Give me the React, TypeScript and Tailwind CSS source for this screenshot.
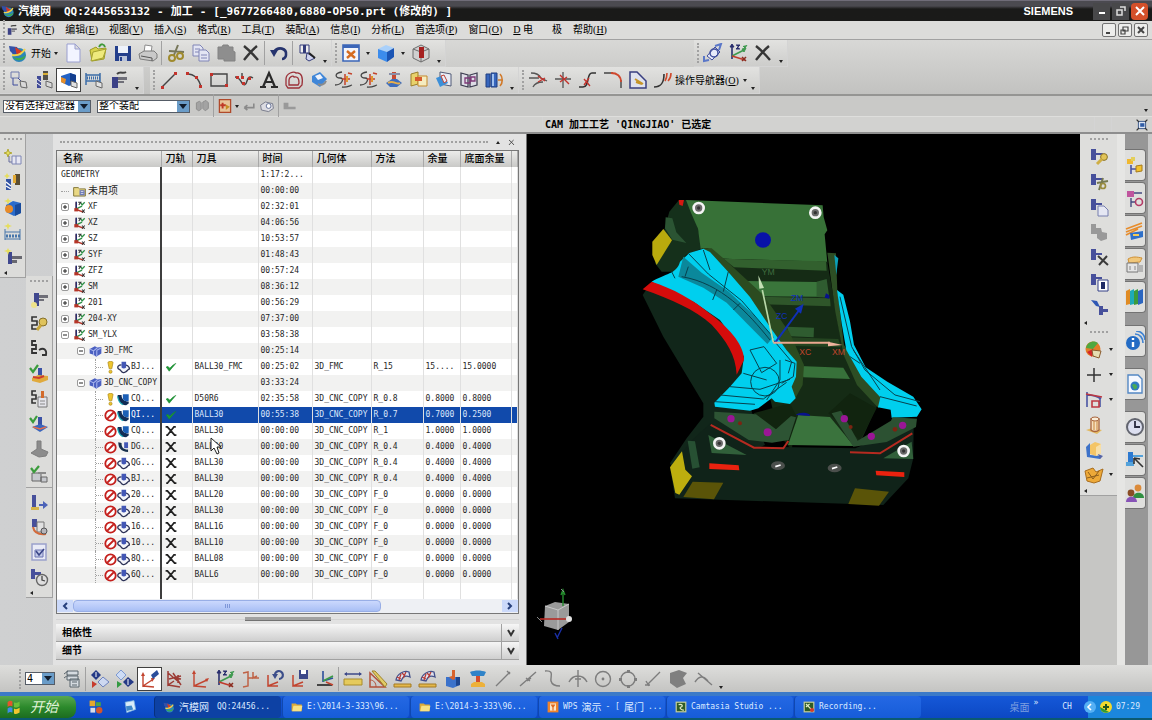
import clsx from "clsx";
import type { ReactNode } from "react";

const icons: Record<string, ReactNode> = {
  nx: (
    <>
      <circle cx="11" cy="12" r="7" fill="#2d86b8" />
      <path d="M5 14c4 5 11 4 13-2-5 4-9 4-13 2z" fill="#3fae45" />
      <path d="M1 3l8 1 3 5-6 3-4-4z" fill="#3350a8" />
      <path d="M7 4l8 5-6 4z" fill="#d63a24" />
      <path d="M4 12c5 1 10-1 13-6" fill="none" stroke="#f0d34a" strokeWidth="2" />
    </>
  ),
  page: <path d="M4 1h8l5 5v13H4zM12 1v5h5" fill="#f2f4ff" stroke="#9a9fd0" />,
  open: (
    <>
      <path d="M2 7l6-3 2 2 8-1-2 11-12 2z" fill="#d8d24e" stroke="#9c9a25" />
      <path d="M5 9l13-3-3 9-12 3z" fill="#eeea7c" stroke="#a5a230" />
      <path d="M11 4c2-4 5-3 6 0" fill="none" stroke="#3f9a3a" strokeWidth="2" />
    </>
  ),
  save: (
    <>
      <path d="M2 3h16v15H2z" fill="#243f8c" />
      <path d="M5 3h10v7H5z" fill="#eef2fa" />
      <path d="M6 13h8v5H6z" fill="#b9c3da" />
      <path d="M7 14h2v4H7z" fill="#243f8c" />
    </>
  ),
  print: (
    <>
      <path d="M7 2l7 1-1 7H6z" fill="#fff" stroke="#8c8c8c" />
      <path d="M1 11l5-3h10l3 3v4l-4 3-13-2z" fill="#c9c9c9" stroke="#7d7d7d" />
      <path d="M3 13l11 2v3" fill="none" stroke="#555" />
    </>
  ),
  cut: (
    <>
      <path d="M12 2L8 12M3 8l15 1" stroke="#77775a" strokeWidth="2" />
      <circle cx="6" cy="15" r="3" fill="none" stroke="#a08b2d" strokeWidth="2" />
      <circle cx="14" cy="13" r="3" fill="none" stroke="#a08b2d" strokeWidth="2" />
    </>
  ),
  copy: (
    <>
      <path d="M2 2h7l3 3v8H2z" fill="#e3e5f3" stroke="#8085b6" />
      <path d="M8 7h7l3 3v8H8z" fill="#e3e5f3" stroke="#8085b6" />
      <path d="M4 6h5M4 9h4M10 12h6M10 15h6" stroke="#8085b6" />
    </>
  ),
  paste: <path d="M2 4h4l1-2h5l1 2h4v4l2 1v9H8v-2H2z" fill="#8e8e8e" stroke="#828282" />,
  cross: <path d="M3 3c5 4 9 8 14 14M16 3C11 7 7 12 3 17" fill="none" stroke="#363636" strokeWidth="2.4" />,
  undo: (
    <>
      <path d="M5 9c4-6 13-4 12 3 0 2-2 4-4 4" fill="none" stroke="#26346e" strokeWidth="2.6" />
      <path d="M1 7l8 0-4 7z" fill="#26346e" />
    </>
  ),
  command: (
    <>
      <path d="M3 2h9v8H3z" fill="#eee" stroke="#333b7a" />
      <path d="M6 2h3v8H6z" fill="#333b7a" />
      <path d="M10 10l8 5-6 3-3-2z" fill="#cfd3ef" stroke="#333b7a" />
      <path d="M12 10l6 5" stroke="#222" strokeWidth="2" />
    </>
  ),
  fit: (
    <>
      <path d="M2 2h16v16H2z" fill="#f3f5fb" stroke="#3b66b8" strokeWidth="1.6" />
      <path d="M2 2h16v3H2z" fill="#3b66b8" />
      <path d="M6 8l8 7M14 8l-8 7" stroke="#d56c20" strokeWidth="2.4" />
    </>
  ),
  cube: (
    <>
      <path d="M2 6l8-4 8 3-7 4z" fill="#a9d0fa" />
      <path d="M2 6l9 3v10l-9-4z" fill="#3c8cec" />
      <path d="M11 9l7-4v9l-7 5z" fill="#1b55b4" />
    </>
  ),
  section: (
    <>
      <path d="M2 6l8-4 8 4v9l-8 4-8-4z" fill="#cfcfcf" stroke="#6d6d6d" />
      <path d="M2 6l8 3 8-3M10 9v10" fill="none" stroke="#6d6d6d" />
      <path d="M8 4h5v11H8z" fill="#a52020" />
    </>
  ),
  orient: (
    <>
      <path d="M4 13l8-9 5 5-8 8z" fill="#e8ebfa" stroke="#3f4d9c" />
      <circle cx="11" cy="10" r="4" fill="none" stroke="#3f4d9c" strokeWidth="1.5" />
      <path d="M12 3l6-2-2 6M1 13v5l5-1" fill="none" stroke="#5a77c8" strokeWidth="2" />
    </>
  ),
  csys: (
    <>
      <path d="M4 2v14" stroke="#2a2f6e" strokeWidth="1.6" />
      <path d="M4 13l12-6" stroke="#3f9a4f" strokeWidth="1.6" />
      <path d="M4 13l13 4" stroke="#c13a2c" strokeWidth="1.6" />
      <path d="M2 4l2-3 2 3zM8 2h4l-4 4h4" fill="#2a2f6e" stroke="#2a2f6e" />
      <path d="M14 6l4-1-2 4zM15 3l2 2 2-3" fill="#3f9a4f" stroke="#3f9a4f" />
      <path d="M14 14l4 4M18 14l-4 4" stroke="#8a2d20" strokeWidth="1.5" />
    </>
  ),
  geomNew: (
    <>
      <path d="M2 2h8v6H2z" fill="none" stroke="#6d78ad" />
      <path d="M4 8v7h5M9 8l3 3" fill="none" stroke="#3f4d9c" />
      <path d="M11 11l6 1 1 6-6-1z" fill="#d9d9d9" stroke="#666" />
    </>
  ),
  toolPair: (
    <>
      <path d="M3 6h4v12H3z" fill="#404a96" />
      <path d="M3 9l4 3M3 13l4 3" stroke="#fff" />
      <path d="M9 1h5v9H9z" fill="#54514a" />
      <path d="M9 3h5v2H9z" fill="#d8ae36" />
      <path d="M12 11l6 2v5l-6-2z" fill="#d9d9d9" stroke="#666" />
    </>
  ),
  blockView: (
    <>
      <path d="M2 6l9-3 6 2v8l-7 3-8-4z" fill="#2463c4" />
      <path d="M11 3l6 2v8l-6 1z" fill="#143f8f" />
      <path d="M2 7l5 2-1 5-4-2z" fill="#e7902b" />
      <path d="M12 11l6 2v5l-6-2z" fill="#e2e2e2" stroke="#666" />
    </>
  ),
  ruler: (
    <>
      <path d="M2 3v12M16 3v9M2 5h14M2 11h14" fill="none" stroke="#3d6da8" strokeWidth="1.5" />
      <path d="M3 8h13" stroke="#3d6da8" strokeDasharray="1 1" strokeWidth="3" />
      <path d="M12 11l6 2v5l-6-2z" fill="#e2e2e2" stroke="#666" />
    </>
  ),
  mill: (
    <>
      <path d="M3 7h6v11H3z" fill="#3b4186" />
      <path d="M9 7h9v3H9zM9 11h6v2H9z" fill="#6f6f78" />
      <path d="M8 4c3-3 6 0 9-2" fill="none" stroke="#444" strokeWidth="2" />
    </>
  ),
  millGlow: (
    <>
      <path d="M5 4h5v13H5z" fill="#3f478e" />
      <path d="M10 6h9v3h-9zM10 10h5v2h-5z" fill="#6f6f78" />
      <circle cx="5" cy="16" r="3" fill="#ece18a" />
    </>
  ),
  starPage: (
    <>
      <path d="M5 2l1 3 3 1-3 1-1 3-1-3-3-1 3-1z" fill="#e6de5c" stroke="#b4ab3a" />
      <path d="M6 9v6h3" fill="none" stroke="#666c9c" />
      <path d="M9 9h9v8H9zM13 9v8" fill="#e7e7f2" stroke="#7f86b4" />
    </>
  ),
  starTool: (
    <>
      <path d="M3 7h5v11H3z" fill="#3454a4" />
      <path d="M3 10l5 4M3 14l5 3" stroke="#fff" strokeWidth="1.4" />
      <path d="M12 2h5v11h-5z" fill="#5a4d33" />
      <path d="M10 3h3v8h-3z" fill="#e3aa34" />
      <path d="M4 1l1 2 2 1-2 1-1 2-1-2-2-1 2-1z" fill="#e6de5c" />
    </>
  ),
  starCube: (
    <>
      <path d="M3 8l7-4 8 2v10l-7 3-8-4z" fill="#2a6ccc" />
      <path d="M12 8l6-2v10l-6 3z" fill="#184b9c" />
      <circle cx="6" cy="12" r="4" fill="#e88b28" />
      <path d="M5 1l1 2 3 1-3 1-1 3-1-3-3-1 3-1z" fill="#e6de5c" />
    </>
  ),
  starRuler: (
    <>
      <path d="M2 7v11M17 7v11M2 10h15M2 17h15" stroke="#4876aa" />
      <path d="M3 14h14" stroke="#4876aa" strokeWidth="3" strokeDasharray="2 1" />
      <path d="M5 1l1 2 3 1-3 1-1 3-1-3-3-1 3-1z" fill="#e6de5c" />
    </>
  ),
  starMill: (
    <>
      <path d="M5 5h4v12H5z" fill="#3f478e" />
      <path d="M9 9h10v3H9zM9 13h5v3H9z" fill="#686870" />
      <path d="M5 1l1 2 3 1-3 1-1 3-1-3-3-1 3-1z" fill="#e6de5c" />
    </>
  ),
  line: (
    <>
      <path d="M3 17L17 3" stroke="#444" strokeWidth="1.4" />
      <path d="M2 16h3v3H2zM15 2h3v3h-3z" fill="#c3332c" />
    </>
  ),
  arc: (
    <>
      <path d="M3 4c8 0 12 5 14 13" fill="none" stroke="#444" strokeWidth="1.4" />
      <path d="M2 2h3v3H2zM11 6h3v3h-3zM15 15h3v3h-3z" fill="#c3332c" />
    </>
  ),
  rect: (
    <>
      <path d="M2 4h16v12H2z" fill="none" stroke="#444" strokeWidth="1.4" />
      <path d="M1 3h3v3H1zM16 14h3v3h-3z" fill="#c3332c" />
    </>
  ),
  spline: (
    <>
      <path d="M1 7c4 0 5 3 7 6s4 2 5-2 3-5 6-3M8 3v6" fill="none" stroke="#444" strokeWidth="1.4" />
      <path d="M2 6h3v3H2zM8 12h3v3H8zM7 6h3v3H7zM14 7h3v3h-3z" fill="#c3332c" />
    </>
  ),
  text: <path d="M1 17h6M12 17h7M4 17l6-14 6 14M6 12h8" fill="none" stroke="#2a2a2a" strokeWidth="2.2" />,
  offset: (
    <>
      <path d="M2 9c0-6 8-8 10-6 6-1 7 5 6 12l-3 3H4l-2-3z" fill="none" stroke="#9b3038" strokeWidth="1.3" />
      <path d="M5 10c0-3 4-5 5-3 4-1 5 2 5 6l-1 2H5z" fill="none" stroke="#9b3038" strokeWidth="1.3" />
    </>
  ),
  patch: (
    <>
      <path d="M3 6l8-4 7 7-7 8-8-5z" fill="#3f86d8" />
      <path d="M6 6l5-2 3 4-5 2z" fill="#eef3fc" />
      <path d="M9 14c3 2 7 0 8-3" fill="none" stroke="#8a8a8a" strokeWidth="2" />
    </>
  ),
  swirl: (
    <>
      <path d="M8 2c-8 1-7 6-2 6s2 7-5 7M8 17c4 1 7-1 10-2" fill="none" stroke="#444" strokeWidth="1.3" />
      <path d="M11 4v11M8 9h8M14 3l4 1" stroke="#c3432c" strokeWidth="1.5" />
      <path d="M12 6h2v6h-2z" fill="#e0952f" />
    </>
  ),
  project: (
    <>
      <path d="M8 2h4v7H8z" fill="#c64a34" />
      <path d="M2 13l6-4h5l5 4-5 4H6z" fill="#3e6dbd" />
      <path d="M4 13c5-3 9 2 12 0" fill="none" stroke="#e8b04d" strokeWidth="2" />
      <path d="M5 3h11v2H5z" fill="#8a8fa8" />
    </>
  ),
  yellowSheets: (
    <>
      <path d="M2 4l7-2v12l-7 2z" fill="#e8d26b" stroke="#9b7f2b" />
      <path d="M9 6h9v10H9z" fill="#f5ecc0" stroke="#c58a2a" />
      <path d="M6 7h7v4H6z" fill="#d65a2c" />
    </>
  ),
  blueSheets: (
    <>
      <path d="M6 2l11 2v12L6 14z" fill="#e9ecf5" stroke="#505a76" />
      <path d="M2 8l8-3 4 8-8 4z" fill="#3c8fd8" />
      <path d="M7 6l3-1 3 6-3 2z" fill="#e8ecf7" stroke="#c34436" />
    </>
  ),
  mirror: (
    <>
      <path d="M2 3l7 2v12l-7-2zM11 5l7-2v12l-7 2z" fill="#dedde6" stroke="#3e3e52" strokeWidth="1.3" />
      <path d="M6 8h5v5H6zM12 7h4v4h-4z" fill="none" stroke="#7d3a78" strokeWidth="1.3" />
    </>
  ),
  extrude: (
    <>
      <path d="M2 4h4v13H2zM7 3h6v14H7z" fill="#3766bd" stroke="#203f80" />
      <path d="M8 4h2v12H8z" fill="#9fc0ef" />
      <path d="M14 10h4M16 4c3 3 3 9 0 12" fill="none" stroke="#d17929" strokeWidth="1.6" />
    </>
  ),
  trimA: (
    <>
      <path d="M1 8h10M3 3c7 0 9 3 10 5l6 3M5 17c2-4 5-5 10-5" fill="none" stroke="#555" strokeWidth="1.3" />
      <path d="M10 6l7 5M10 12l7-4" stroke="#c3332c" strokeWidth="1.4" />
    </>
  ),
  trimB: (
    <>
      <path d="M2 9h16M10 2v16" stroke="#555" strokeWidth="1.3" />
      <path d="M7 5l9 9M7 12l7-5" stroke="#c3332c" strokeWidth="1.4" />
    </>
  ),
  trimC: (
    <>
      <path d="M1 17h4c7 0 3-14 9-14h4" fill="none" stroke="#333" strokeWidth="1.6" />
      <path d="M6 9l6 7M6 15l5-7" stroke="#c3332c" strokeWidth="1.3" />
    </>
  ),
  fillet: (
    <>
      <path d="M1 3h9M18 10v8" stroke="#444" strokeWidth="1.4" />
      <path d="M8 3c6 0 10 3 10 9" fill="none" stroke="#d0482e" strokeWidth="1.8" />
    </>
  ),
  sketch: (
    <>
      <path d="M2 2h7l9 9v7H2z" fill="#dfe2ee" stroke="#3a3f80" strokeWidth="1.5" />
      <path d="M7 9l8 5M8 12l6 2" stroke="#c69428" strokeWidth="2" />
    </>
  ),
  curves: (
    <>
      <path d="M1 17c8 0 10-5 10-13" fill="none" stroke="#333" strokeWidth="1.6" />
      <path d="M12 11c2-3 2-6 2-8M15 11c3-3 3-6 3-8" fill="none" stroke="#cf4a2c" strokeWidth="1.6" />
    </>
  ),
  binocular: <path d="M3 14V6l4-2 2 2v8l-3 2zM11 13V5l4-2 3 3v7l-4 3z" fill="#a3a3a3" stroke="#888" />,
  snap: (
    <>
      <path d="M3 2h14v16H3z" fill="#e8c59a" stroke="#b04a2b" strokeWidth="1.6" />
      <path d="M4 9h7M7 6v7" stroke="#c03a26" strokeWidth="2.4" />
      <path d="M11 8l5 3-5 4z" fill="#c58f23" />
    </>
  ),
  enter: <path d="M4 12h12V7M4 12l4-3M4 12l4 3" fill="none" stroke="#8a8a8a" strokeWidth="2" />,
  solids: (
    <>
      <path d="M2 9l6-4 9 2 1 6-6 4-9-2z" fill="#dcdce2" stroke="#666a7c" />
      <circle cx="12" cy="10" r="3" fill="#fff" stroke="#4b5a88" />
    </>
  ),
  ledge: <path d="M2 6h6v5h9v3H2z" fill="#999" />,
  toolKey: (
    <>
      <path d="M8 3H3v4h5v4H3v4h5" fill="none" stroke="#333" strokeWidth="1.6" />
      <circle cx="14" cy="8" r="4" fill="#dfc35c" stroke="#85702a" />
      <path d="M12 11l-4 5" stroke="#c7a63c" strokeWidth="3" />
    </>
  ),
  toolHook: <path d="M7 2H3v4h4v4H3v4h5M10 11c5-3 8 0 7 5h-4" fill="none" stroke="#333" strokeWidth="1.8" />,
  verify: (
    <>
      <path d="M9 4h4v9H9z" fill="#3a51a5" />
      <path d="M3 14l6-3 10 1v4l-8 3-8-2z" fill="#e0aa3c" />
      <path d="M4 13l6 1 5-2" stroke="#cf3c2c" strokeWidth="2" fill="none" />
      <path d="M1 4l3 4 5-7" fill="none" stroke="#3b9c3c" strokeWidth="2.2" />
    </>
  ),
  toolPost: (
    <>
      <path d="M7 2H3v4h4v4H3v4h4" fill="none" stroke="#333" strokeWidth="1.6" />
      <path d="M9 8h9v10H9z" fill="#e4e4ea" stroke="#777" />
      <path d="M12 2h3v7h-3z" fill="#d36b2c" />
      <path d="M11 12h5M11 15h5" stroke="#888" />
    </>
  ),
  okPlane: (
    <>
      <path d="M9 3h4v9H9z" fill="#3a51a5" />
      <path d="M3 13l8-3 8 3-8 5z" fill="#3b66bd" />
      <path d="M4 13l7 2 6-2" fill="none" stroke="#e36f4c" strokeWidth="1.5" />
      <path d="M1 4l3 4 4-6" fill="none" stroke="#3b9c3c" strokeWidth="2.2" />
    </>
  ),
  greyPlane: <path d="M8 2h4v8l7 3-2 4-7 1-8-4 6-4z" fill="#8c8c8c" stroke="#7d7d7d" />,
  okShop: (
    <>
      <path d="M3 9h9v8H3zM12 13h6v5h-6z" fill="#c7c9ce" stroke="#666" />
      <path d="M9 8h8v2H9z" fill="#8a8a8a" />
      <path d="M2 4l3 4 5-6" fill="none" stroke="#3b9c3c" strokeWidth="2.2" />
    </>
  ),
  drillArrow: (
    <>
      <path d="M3 3h4v13H3z" fill="#47509b" />
      <path d="M2 15h8v3H2z" fill="#d6b44b" />
      <path d="M10 12h4v-3l5 4-5 4v-3h-4z" fill="#4c63b8" />
    </>
  ),
  post: (
    <>
      <path d="M3 2h5v8H3z" fill="#47509b" />
      <path d="M8 5h7v10H8z" fill="#e1e1e1" stroke="#777" />
      <path d="M4 10c1 5 5 8 13 7" fill="none" stroke="#d36b3c" strokeWidth="2" />
      <circle cx="15" cy="14" r="3" fill="#b6b6bc" stroke="#555" />
    </>
  ),
  report: (
    <>
      <path d="M3 2h14v16H3z" fill="#e9ebf6" stroke="#9aa1cc" strokeWidth="1.5" />
      <path d="M6 8h8v7H6z" fill="#c1c9e8" stroke="#6c75b2" />
      <path d="M7 9l3 4 5-6" fill="none" stroke="#3a4588" strokeWidth="1.6" />
    </>
  ),
  timer: (
    <>
      <path d="M2 2h4v10H2zM6 5h6v3H6z" fill="#47509b" />
      <circle cx="13" cy="13" r="5.5" fill="#dedede" stroke="#666" strokeWidth="1.4" />
      <path d="M13 9v4l3 1" fill="none" stroke="#444" strokeWidth="1.3" />
    </>
  ),
  drillKey: (
    <>
      <path d="M2 2h5v11H2zM7 6h7v2H7z" fill="#47509b" />
      <circle cx="15" cy="10" r="3.4" fill="#e2c458" stroke="#8a742a" />
      <path d="M13 12l-5 5" stroke="#cfae44" strokeWidth="3" />
    </>
  ),
  drillCut: (
    <>
      <path d="M2 2h5v11H2zM7 6h6v2H7z" fill="#47509b" />
      <path d="M8 11l11-2M14 6l-4 12" stroke="#777a50" strokeWidth="2" />
      <circle cx="14" cy="14" r="2.5" fill="none" stroke="#9a8c3d" strokeWidth="1.7" />
    </>
  ),
  drillCopy: (
    <>
      <path d="M2 2h5v11H2zM7 6h6v2H7z" fill="#47509b" />
      <path d="M9 9h6l4 4v6H9z" fill="#e5e7f3" stroke="#777eae" />
    </>
  ),
  drillGrey: <path d="M2 2h5v4h5l1 4 5 1v6l-6 2-4-3v-4H2z" fill="#999" />,
  drillDel: (
    <>
      <path d="M2 2h5v11H2zM7 6h6v2H7z" fill="#47509b" />
      <path d="M9 9l10 9M18 9l-8 9" stroke="#3b3b3b" strokeWidth="2" />
    </>
  ),
  drillInfo: (
    <>
      <path d="M2 2h5v11H2zM7 5h6v2H7z" fill="#47509b" />
      <path d="M9 8h10v11H9z" fill="#fff" stroke="#333f85" />
      <path d="M12 10h4v7h-4z" fill="#1f2a66" />
    </>
  ),
  drillMove: (
    <>
      <path d="M2 3l6 1 3 6-4-1z" fill="#2f57b4" />
      <path d="M10 9h4v9h-4zM14 12h5v3h-5z" fill="#47509b" />
    </>
  ),
  shaded: (
    <>
      <circle cx="9" cy="9" r="7.5" fill="#e37c28" />
      <path d="M2 8c1-7 9-8 12-5L9 9z" fill="#4fa83f" />
      <path d="M3 12l6-3-1 8z" fill="#d3262a" />
      <path d="M8 10l9 1-2 7-6-2z" fill="#e6ddb2" stroke="#8a5c2e" />
    </>
  ),
  plus: <path d="M10 3v14M3 10h14" stroke="#333" strokeWidth="1.5" />,
  wcs: (
    <>
      <path d="M3 2v15M3 5c6 0 10 1 14 4M16 7v10" fill="none" stroke="#4954a3" strokeWidth="1.6" />
      <path d="M2 4l16 3M8 11h7v6H8z" fill="none" stroke="#bd3841" strokeWidth="1.6" />
    </>
  ),
  tower: (
    <>
      <path d="M2 15l6-2 10 2-5 4z" fill="#e3ba62" />
      <path d="M7 4v11c2 2 6 2 8 0V4z" fill="#f6e0bf" stroke="#a8643c" strokeWidth="1.3" />
      <ellipse cx="11" cy="4" rx="4" ry="2" fill="#f9ecd8" stroke="#a8643c" />
      <path d="M10 6v9M13 6v9" stroke="#c9843c" />
    </>
  ),
  stock: (
    <>
      <path d="M2 7l4-4v12l12 1-2 3-13-2z" fill="#3d72c8" />
      <path d="M6 5l5-3 6 2v9l-5 3-6-2z" fill="#f4c566" />
      <path d="M12 7l5-3v9l-5 3z" fill="#f7dfa8" />
      <path d="M14 14l5 2-3 3z" fill="#5563a5" />
    </>
  ),
  wraps: (
    <>
      <path d="M1 6l8-3 3 4 7-3-3 12-6 2-7-2z" fill="#eda938" stroke="#a86d1e" />
      <path d="M4 7l5 7 6-8M3 13l12-3" fill="none" stroke="#8c5d1c" />
    </>
  ),
  navA: (
    <>
      <path d="M2 4h6v5H2z" fill="#f0b830" />
      <path d="M6 2h4v4H6z" fill="#e3cf5c" />
      <path d="M6 10v9M6 14h6" stroke="#4954a3" strokeWidth="1.6" />
      <path d="M11 11l6-1v6l-6 1z" fill="#f2c12f" stroke="#a67b1d" />
    </>
  ),
  navB: (
    <>
      <path d="M2 3h7v6H2z" fill="#c0559e" />
      <path d="M9 5h8M6 10v9M6 14h5" stroke="#444a80" strokeWidth="1.4" />
      <circle cx="14" cy="14" r="3.5" fill="none" stroke="#b33a66" strokeWidth="1.6" />
    </>
  ),
  navC: (
    <>
      <path d="M1 8L17 2M1 11l16-6M1 14l12-6" stroke="#e78d2d" strokeWidth="1.7" />
      <path d="M5 12l13-2v6l-12 3z" fill="#2f70c9" />
      <path d="M8 13h6v2H8z" fill="#f1ca5a" />
    </>
  ),
  navD: (
    <>
      <path d="M3 5c5-3 9-2 14-1l-2 4-11 1z" fill="#f1c77a" stroke="#cf9136" />
      <path d="M2 9h11v9H2z" fill="#e5e5e5" stroke="#777" />
      <path d="M13 11h5v7h-5z" fill="#b3b3b3" />
      <path d="M5 12v4M10 12v4" stroke="#888" />
    </>
  ),
  books: (
    <>
      <path d="M1 4l4-2v15l-4 1z" fill="#e08b23" />
      <path d="M5 4l4-2v15l-4 1z" fill="#1eaab8" />
      <path d="M9 4l4-2v15l-4 1z" fill="#3c9a3c" />
      <path d="M13 4l5-2v14l-5 2z" fill="#2c66c0" />
    </>
  ),
  info: (
    <>
      <circle cx="8" cy="12" r="7" fill="#236bc4" />
      <path d="M8 7v2M8 11v5" stroke="#fff" strokeWidth="2.4" />
      <path d="M10 3c5 0 8 4 8 9M11 0c6 0 9 5 9 9" fill="none" stroke="#3f83d3" strokeWidth="1.6" />
    </>
  ),
  webPage: (
    <>
      <path d="M3 1h10l4 4v14H3z" fill="#f5f8ff" stroke="#5488c4" strokeWidth="1.4" />
      <circle cx="10" cy="12" r="4.5" fill="#2f7bc2" />
      <path d="M7 11c2-2 4-1 5 1s-2 4-3 3z" fill="#49ab56" />
    </>
  ),
  clock: (
    <>
      <circle cx="10" cy="10" r="8" fill="#dcdff0" stroke="#62656f" strokeWidth="2" />
      <path d="M10 4v6h5" fill="none" stroke="#2a2c40" strokeWidth="1.8" />
    </>
  ),
  machine: (
    <>
      <path d="M3 2h5v11H3z" fill="#2c79d0" />
      <path d="M8 5h10v2H8zM1 12h8v4H1z" fill="#54a2da" />
      <path d="M9 8l9 9M9 8v6M9 8l6 1" stroke="#333" strokeWidth="1.6" />
    </>
  ),
  roles: (
    <>
      <circle cx="13" cy="5" r="3.4" fill="#dc8b3a" />
      <path d="M8 15c0-7 11-7 11 0z" fill="#2f8f41" />
      <circle cx="6" cy="10" r="3.4" fill="#8a4d25" />
      <path d="M1 19c0-7 11-7 11 0z" fill="#8753b6" />
    </>
  ),
  layers: (
    <>
      <path d="M5 2h11v4H5zM5 7h11v4H5zM8 10h9v8H8z" fill="#d5dbe0" stroke="#59646c" />
      <path d="M2 5l4-3M2 9l4-3M10 13h5M10 16h5" stroke="#59646c" />
    </>
  ),
  gouge: (
    <>
      <path d="M6 1l5 5-5 5-5-5z" fill="#253a86" />
      <path d="M6 3v5" stroke="#fff" />
      <path d="M13 8l6 5-6 5-5-5z" fill="#cdd8f1" stroke="#6d82bf" />
      <path d="M2 12l5 3-5 4z" fill="#c73b2c" />
    </>
  ),
  gougeB: (
    <>
      <path d="M6 1l5 5-5 5-5-5z" fill="#cddcf5" stroke="#7e9ad1" />
      <path d="M13 8l6 5-6 5-5-5z" fill="#253a86" />
      <path d="M13 10v6" stroke="#fff" />
      <path d="M2 12l5 3-5 4z" fill="#339a42" />
    </>
  ),
  axes: (
    <>
      <path d="M4 3v14L17 11M4 17l12 1" fill="none" stroke="#c2442f" strokeWidth="1.4" />
      <path d="M2 5l2-4 2 4zM15 10l4-1-2 4z" fill="#c2442f" />
    </>
  ),
  axesPen: (
    <>
      <path d="M3 6v11l9-6M3 17l11 1" fill="none" stroke="#c2442f" strokeWidth="1.4" />
      <path d="M1 7l2-4 2 4zM11 9l4 0-3 4z" fill="#c2442f" />
      <path d="M11 6l6-5 2 4-6 5z" fill="#2c4f9c" />
    </>
  ),
  axesMesh: (
    <path
      d="M3 2v14l6-4M3 16l12 2M3 4l12 10M8 4l8 12M4 10l12-3M13 6v8M9 9l7 1"
      fill="none"
      stroke="#9c3b34"
      strokeWidth="1.5"
    />
  ),
  axesArrow: <path d="M3 4l5-1v14l-5 1M8 9h11M13 3v6l4-2" fill="none" stroke="#bf6246" strokeWidth="1.5" />,
  axesTurn: (
    <>
      <path d="M3 6v11l10-4M3 17h10" fill="none" stroke="#c2442f" strokeWidth="1.5" />
      <path d="M10 7a4 4 0 1 1 4 3" fill="none" stroke="#3c4e8a" strokeWidth="2.2" />
      <path d="M7 5h6l-3 5z" fill="#3c4e8a" />
    </>
  ),
  axesSave: (
    <>
      <path d="M3 6v11l10-4M3 17h10" fill="none" stroke="#c2442f" strokeWidth="1.5" />
      <path d="M9 1h9v9H9z" fill="#3c4889" />
      <path d="M11 1h5v4h-5z" fill="#fff" />
    </>
  ),
  axesBar: (
    <>
      <path d="M8 2v11M8 12l10-3" stroke="#2c4f9c" strokeWidth="1.6" />
      <path d="M8 12l10-5" stroke="#3b9b46" strokeWidth="1.6" />
      <path d="M2 15h15v2H2z" fill="#444" />
      <path d="M11 13l7 3" stroke="#c2442f" strokeWidth="1.5" />
    </>
  ),
  measure: (
    <>
      <path d="M1 10h18v6H1z" fill="#e5ca5c" stroke="#a98c2a" />
      <path d="M2 5h16" stroke="#3c4889" strokeWidth="1.5" />
      <path d="M1 5l3-2v4zM19 5l-3-2v4z" fill="#3c4889" />
    </>
  ),
  angle: (
    <>
      <path d="M2 4v14h15z" fill="none" stroke="#b2503a" strokeWidth="1.5" />
      <path d="M4 2l3 0 12 13-2 3z" fill="#e2cb66" stroke="#9c842c" />
      <path d="M2 11c4 0 6 3 6 7" fill="none" stroke="#b2503a" />
    </>
  ),
  gauge: (
    <>
      <path d="M3 11c1-6 8-10 13-8l1 5c-4-2-7-1-9 4z" fill="#dfe2ee" stroke="#44508a" strokeWidth="1.3" />
      <path d="M6 11l2-6M10 9l3-6M4 8l4 2M9 4l3 3" stroke="#b73a34" strokeWidth="1.3" />
      <path d="M1 15h17v3H1z" fill="#e4b84a" stroke="#a47a22" />
    </>
  ),
  pot: (
    <>
      <path d="M3 8h14v8l-7 3-7-2z" fill="#3b72cb" />
      <path d="M13 8h4v8l-4 1z" fill="#1e468f" />
      <path d="M9 1h3v9l-2 1-4-3 3-1z" fill="#d9622b" />
    </>
  ),
  stamp: (
    <>
      <path d="M2 3c5-2 11-2 16 0l-2 4H4z" fill="#2f83c8" />
      <path d="M8 7h4v7H8z" fill="#d34c2c" />
      <path d="M3 15l3-2h8l3 2v3H3z" fill="#edb13a" />
    </>
  ),
  gLine: <path d="M3 17L17 3M14 2l3 3" stroke="#7d7d7d" strokeWidth="1.4" fill="none" />,
  gLineDot: <path d="M2 17L18 3M8 9l4 3M9 12l4-3" stroke="#7d7d7d" strokeWidth="1.4" fill="none" />,
  gCurve: <path d="M2 2c10-1 5 6 6 10s4 5 9 5" stroke="#7d7d7d" strokeWidth="1.4" fill="none" />,
  gCross: <path d="M10 1v17M1 13c4-8 14-8 18 0M7 10h6" stroke="#7d7d7d" strokeWidth="1.4" fill="none" />,
  gTarget: (
    <>
      <circle cx="10" cy="10" r="7.5" fill="none" stroke="#7d7d7d" strokeWidth="1.4" />
      <circle cx="10" cy="10" r="1.4" fill="#7d7d7d" />
    </>
  ),
  gCircle: (
    <>
      <circle cx="10" cy="10" r="7" fill="none" stroke="#7d7d7d" strokeWidth="1.4" />
      <path d="M9 1h3v3H9zM9 16h3v3H9zM1 9h3v3H1zM16 9h3v3h-3z" fill="#7d7d7d" />
    </>
  ),
  gSlash: <path d="M5 15L17 3M3 12l3 5M2 16h5" stroke="#7d7d7d" strokeWidth="1.4" fill="none" />,
  gFace: <path d="M2 4l9-3 8 3-4 5 3 6-9 4-7-5z" fill="#7f7f7f" />,
  gTangent: <path d="M2 13c4-6 8-7 13-1M5 4l14 12" stroke="#7d7d7d" strokeWidth="1.4" fill="none" />,
  flag: (
    <>
      <path d="M2 4c2-2 4-2 6-1v6c-2-1-4-1-6 1z" fill="#e5552c" />
      <path d="M10 4c2 1 4 1 7-1v6c-3 2-5 2-7 1z" fill="#6cc03a" />
      <path d="M2 12c2-2 4-2 6-1v6c-2-1-4-1-6 1z" fill="#3f8ce8" />
      <path d="M10 12c2 1 4 1 7-1v6c-3 2-5 2-7 1z" fill="#f3c62f" />
    </>
  ),
  quick: (
    <>
      <path d="M2 2h7v7H2z" fill="#e5a82e" />
      <path d="M10 4h6v5h-6z" fill="#4aa348" />
      <path d="M3 11h6v6H3z" fill="#d9dde8" />
      <circle cx="14" cy="14" r="4" fill="#d4552b" />
    </>
  ),
  desktop: (
    <>
      <path d="M4 4l11-2 2 11-11 4z" fill="#d9ecf9" stroke="#7fb5df" />
      <path d="M5 9l7-1 2 5-8 2z" fill="#3f88c9" />
    </>
  ),
  folder: (
    <>
      <path d="M1 4h7l2 2h8v11H1z" fill="#dba938" />
      <path d="M4 8h15l-2 9H2z" fill="#f7e183" />
    </>
  ),
  wps: (
    <>
      <path d="M1 1h18v18H1z" fill="#f0842b" />
      <path d="M5 4h10v12H5z" fill="#fbe7c9" />
      <path d="M6 6h8l-3 5v5H9v-5z" fill="#e36a1f" />
    </>
  ),
  camtasia: (
    <>
      <path d="M1 1h18v18H1z" fill="#c6cf9d" />
      <path d="M3 3h14v14H3z" fill="#2f5c25" />
      <path d="M6 6c6-2 8 3 4 4s1 6 5 5" fill="none" stroke="#e5edc5" strokeWidth="2" />
    </>
  ),
  recorder: (
    <>
      <path d="M1 1h18v18H1z" fill="#c6cf9d" />
      <path d="M3 3h14v14H3z" fill="#2f5c25" />
      <path d="M5 5l8 8M5 10l6-5" stroke="#e5edc5" strokeWidth="2" />
      <circle cx="15" cy="15" r="3.5" fill="#d73c2c" />
    </>
  ),
  unused: (
    <>
      <path d="M1 4h7l2 2h9v11H1z" fill="#e9d884" stroke="#84783a" strokeWidth="1.5" />
      <path d="M10 8h8v8h-8z" fill="#6d7ab6" />
      <path d="M12 10h4M12 13h4" stroke="#fff" />
    </>
  ),
  mcs: (
    <>
      <path d="M5 2v11l11 4" fill="none" stroke="#b53528" strokeWidth="2.2" />
      <path d="M5 1v11" stroke="#25306f" strokeWidth="2.4" />
      <path d="M5 12l9-4M12 3l2 3 4-4" fill="none" stroke="#2e8e46" strokeWidth="2" />
      <path d="M2 11h6v5H2z" fill="#b53528" />
      <path d="M8 2h4l-3 4M14 13l4 5M18 13l-4 5" fill="none" stroke="#333" strokeWidth="1.6" />
    </>
  ),
  workpiece: (
    <>
      <path d="M1 6l8-4 4 2 6-1v10l-8 5-4-3-6-2z" fill="#4a5fc0" />
      <path d="M1 6l6 3 6-5M7 9v7M12 8l6-3M12 8v9" fill="none" stroke="#a9b6ee" strokeWidth="1.6" />
    </>
  ),
  warn: (
    <>
      <path d="M6 2c2-2 6-2 8 0l-2 10H8z" fill="#eec52e" stroke="#a88412" />
      <circle cx="10" cy="16.5" r="2.4" fill="#eec52e" stroke="#a88412" />
    </>
  ),
  deny: (
    <>
      <circle cx="10" cy="10" r="8" fill="#fff" stroke="#c41f1c" strokeWidth="2.8" />
      <path d="M15 5L5 15" stroke="#c41f1c" strokeWidth="2.8" />
    </>
  ),
  contour: (
    <>
      <path d="M7 6c-5 0-7 3-5 6 1 1 3 1 4 3s4 4 7 2 3-3 5-4 1-6-5-7" fill="#f4f5fa" stroke="#2e3358" strokeWidth="2" />
      <path d="M7 1h7v9c-2 2-5 2-7 0z" fill="#4357b5" />
    </>
  ),
  cavity: (
    <>
      <path d="M1 3c0 8 4 15 13 16l4-3v-3C11 13 7 9 7 3z" fill="#122c55" />
      <path d="M9 2h9v10c-4 2-8 0-9-3z" fill="#1b5fb6" />
      <path d="M1 5c1 7 4 11 8 13" fill="none" stroke="#17a9b6" strokeWidth="2" />
    </>
  ),
  slab: (
    <>
      <path d="M2 2c0 9 4 14 15 15v-4C9 13 7 9 7 3z" fill="#17304d" />
      <path d="M11 2h6v9h-6z" fill="#4357b5" />
    </>
  ),
  check: <path d="M2 10l5 7L18 4l-5 3-5 5-3-3z" fill="#1c9a35" stroke="#17862d" />,
  noPath: <path d="M1 3h3l12 14h3M18 3h-3L4 17H2" fill="none" stroke="#222" strokeWidth="3" />,
  expand: (
    <>
      <path d="M4 4h12v12H4z" fill="#dfe6f2" stroke="#2f4f86" strokeWidth="1.5" />
      <path d="M7 7h7v6H7z" fill="#2f5ca6" />
      <path d="M1 1l4 4M19 1l-4 4M1 19l4-4M19 19l-4-4" stroke="#333" strokeWidth="2" />
    </>
  ),
};

type IconProps = { name: string; className?: string };

const Icon = ({ name, className = "size-5" }: IconProps) => (
  <svg viewBox="0 0 20 20" className={clsx("shrink-0", className)} aria-hidden="true">
    {icons[name]}
  </svg>
);

const Tool = ({ name, active }: { name: string; active?: boolean }) => (
  <button
    type="button"
    aria-label={name}
    className={clsx(
      "flex h-6 w-[25px] shrink-0 items-center justify-center",
      active && "border border-neutral-700 bg-white"
    )}
  >
    <Icon name={name} />
  </button>
);

const Caret = () => (
  <svg viewBox="0 0 4 3" className="h-[3px] w-1 shrink-0" aria-hidden="true">
    <path d="M0 0h4L2 3z" fill="#222" />
  </svg>
);

const DropCaret = () => (
  <span className="flex w-[10px] shrink-0 items-center justify-center">
    <Caret />
  </span>
);

const More = () => (
  <span className="flex h-5 w-3 shrink-0 items-end justify-center">
    <Caret />
  </span>
);

const Grip = () => <span className="mr-px ml-[3px] h-5 shrink-0 border-l-2 border-dotted border-neutral-400" />;
const Divider = () => <span className="mx-px h-6 w-px shrink-0 bg-neutral-400" />;

const Band = ({ children }: { children: ReactNode }) => (
  <div className="flex items-center border-r border-b border-neutral-300 bg-linear-to-b from-[#e2e2e0] to-[#cdcdcb]">
    {children}
  </div>
);

const Combo = ({ label, value, className }: { label: string; value: string; className: string }) => (
  <label className={clsx("relative block shrink-0", className)}>
    <select
      aria-label={label}
      className="block h-[13px] w-full appearance-none overflow-hidden border border-[#555c66] bg-white pl-px text-[10px] leading-none text-black"
    >
      <option>{value}</option>
    </select>
    <span className="pointer-events-none absolute inset-y-px right-px flex w-3 items-center justify-center bg-[#6a9cc8]">
      <svg viewBox="0 0 8 5" className="h-[5px] w-2">
        <path d="M0 0h8L4 5z" fill="#111c2c" />
      </svg>
    </span>
  </label>
);

const menus: [string, string][] = [
  ["文件", "F"],
  ["编辑", "E"],
  ["视图", "V"],
  ["插入", "S"],
  ["格式", "R"],
  ["工具", "T"],
  ["装配", "A"],
  ["信息", "I"],
  ["分析", "L"],
  ["首选项", "P"],
  ["窗口", "O"],
];

const MenuItem = ({ label, hotkey }: { label: string; hotkey: string }) => (
  <button type="button" className="whitespace-nowrap">
    {label}(<u>{hotkey}</u>)
  </button>
);

type Row = {
  name: string;
  level: number;
  kind?: string;
  status?: string;
  open?: boolean;
  cells: string[];
};

const group = (name: string, time: string): Row => ({ name, level: 1, kind: "mcs", cells: [time] });

const op = (
  name: string,
  status: string,
  kind: string,
  tool: string,
  time: string,
  geometry: string,
  method: string,
  stock: string,
  floor: string
): Row => ({ name, level: 3, kind, status, cells: [time, tool, geometry, method, stock, floor] });

const COPY = "3D_CNC_COPY";

const rows: Row[] = [
  { name: "GEOMETRY", level: 0, cells: ["1:17:2..."] },
  { name: "未用项", level: 1, kind: "unused", cells: ["00:00:00"] },
  group("XF", "02:32:01"),
  group("XZ", "04:06:56"),
  group("SZ", "10:53:57"),
  group("SYF", "01:48:43"),
  group("ZFZ", "00:57:24"),
  group("SM", "08:36:12"),
  group("201", "00:56:29"),
  group("204-XY", "07:37:00"),
  { ...group("SM_YLX", "03:58:38"), open: true },
  { name: "3D_FMC", level: 2, kind: "workpiece", open: true, cells: ["00:25:14"] },
  op("BJ...", "warn", "contour", "BALL30_FMC", "00:25:02", "3D_FMC", "R_15", "15....", "15.0000"),
  { name: COPY, level: 2, kind: "workpiece", open: true, cells: ["03:33:24"] },
  op("CQ...", "warn", "cavity", "D50R6", "02:35:58", COPY, "R_0.8", "0.8000", "0.8000"),
  op("QI...", "deny", "cavity", "BALL30", "00:55:38", COPY, "R_0.7", "0.7000", "0.2500"),
  op("CQ...", "deny", "cavity", "BALL30", "00:00:00", COPY, "R_1", "1.0000", "1.0000"),
  op("DG...", "deny", "slab", "BALL30", "00:00:00", COPY, "R_0.4", "0.4000", "0.4000"),
  op("QG...", "deny", "contour", "BALL30", "00:00:00", COPY, "R_0.4", "0.4000", "0.4000"),
  op("BJ...", "deny", "contour", "BALL30", "00:00:00", COPY, "R_0.4", "0.4000", "0.4000"),
  op("20...", "deny", "contour", "BALL20", "00:00:00", COPY, "F_0", "0.0000", "0.0000"),
  op("20...", "deny", "contour", "BALL30", "00:00:00", COPY, "F_0", "0.0000", "0.0000"),
  op("16...", "deny", "contour", "BALL16", "00:00:00", COPY, "F_0", "0.0000", "0.0000"),
  op("10...", "deny", "contour", "BALL10", "00:00:00", COPY, "F_0", "0.0000", "0.0000"),
  op("8Q...", "deny", "contour", "BALL08", "00:00:00", COPY, "F_0", "0.0000", "0.0000"),
  op("6Q...", "deny", "contour", "BALL6", "00:00:00", COPY, "F_0", "0.0000", "0.0000"),
];

const Toggle = ({ open }: { open?: boolean }) => (
  <button type="button" aria-label={open ? "折叠" : "展开"} className="shrink-0">
    <svg viewBox="0 0 8 8" className="size-2">
      <rect x="0.5" y="0.5" width="7" height="7" rx="1.5" fill="#fff" stroke="#999" />
      <path d={open ? "M2 4h4" : "M2 4h4M4 2v4"} stroke="#222" />
    </svg>
  </button>
);

const NameCell = ({ row, selected }: { row: Row; selected: boolean }) => {
  if (row.level === 0) return <span className="pl-1">{row.name}</span>;

  if (row.level === 3) {
    return (
      <div className="flex h-4 items-center pl-[38px]">
        <span className="h-4 w-2 shrink-0 border-l border-dotted border-neutral-400 pt-2">
          <span className="block border-t border-dotted border-neutral-400" />
        </span>
        <Icon name={row.status ?? ""} className="ml-px size-[13px]" />
        <Icon name={row.kind ?? ""} className="size-[13px]" />
        <span className={clsx("flex h-4 flex-1 items-center pl-px", selected && "bg-[#114aab] text-white")}>
          {row.name}
        </span>
      </div>
    );
  }

  return (
    <div className={clsx("flex h-4 items-center gap-1", row.level === 1 ? "pl-1" : "pl-5")}>
      {row.kind === "unused" ? (
        <span className="h-px w-2 border-t border-dotted border-neutral-400" />
      ) : (
        <Toggle open={row.open} />
      )}
      <span className="flex items-center gap-[2px]">
        <Icon name={row.kind ?? ""} className="size-[13px]" />
        <span className={row.kind === "unused" ? "text-[10px]" : ""}>{row.name}</span>
      </span>
    </div>
  );
};

const OperationTable = () => (
  <table className="w-full table-fixed border-collapse bg-white text-[8px] leading-none text-neutral-800">
    <colgroup>
      <col className="w-[104px]" />
      <col className="w-[31px]" />
      <col className="w-[66px]" />
      <col className="w-[54px]" />
      <col className="w-[59px]" />
      <col className="w-[52px]" />
      <col className="w-[37px]" />
      <col className="w-[51px]" />
      <col />
    </colgroup>
    <thead>
      <tr className="h-4 bg-linear-to-b from-[#ececea] to-[#c9c9c7] text-left text-[10px] text-black">
        {["名称", "刀轨", "刀具", "时间", "几何体", "方法", "余量", "底面余量", ""].map((title, i) => (
          <th
            key={i}
            className={clsx(
              "overflow-hidden whitespace-nowrap border-r border-[#a8a8a8] p-0 font-medium",
              i === 0 ? "pl-[6px]" : "pl-1"
            )}
          >
            {title}
          </th>
        ))}
      </tr>
    </thead>
    <tbody>
      {rows.map((row, i) => {
        const selected = i === 15;
        const [time, tool = "", geometry = "", method = "", stock = "", floor = ""] = row.cells;
        return (
          <tr
            key={i}
            className={clsx(
              "h-4",
              i % 2 === 1 && !selected && "bg-[#f2f2f1]",
              selected && "text-[#dbe6fb]"
            )}
          >
            <td className="overflow-hidden whitespace-nowrap border-r-2 border-[#3d3d3d] p-0">
              <NameCell row={row} selected={selected} />
            </td>
            <td className={clsx("p-0 pl-[3px]", selected && "bg-[#114aab]")}>
              {row.level === 3 ? (
                <Icon name={i === 12 || i === 14 || i === 15 ? "check" : "noPath"} className="size-3" />
              ) : null}
            </td>
            {[tool, time, geometry, method, stock, floor, ""].map((cell, c) => (
              <td
                key={c}
                className={clsx(
                  "overflow-hidden whitespace-nowrap border-x border-[#e0e0e0] p-0 pl-[2px]",
                  selected && "bg-[#114aab]"
                )}
              >
                {cell}
              </td>
            ))}
          </tr>
        );
      })}
      <tr className="h-4">
        <td className="border-r-2 border-[#3d3d3d]" />
        {[0, 1, 2, 3, 4, 5, 6, 7].map((c) => (
          <td key={c} className="border-r border-[#e0e0e0]" />
        ))}
      </tr>
    </tbody>
  </table>
);

const Section = ({ title }: { title: string }) => (
  <button
    type="button"
    className="flex h-[18px] w-full items-center justify-between border-b border-neutral-400 bg-linear-to-b from-[#f6f6f6] to-[#cfcfcf] pl-[6px] text-[10px] font-bold"
  >
    {title}
    <span className="flex h-full w-[18px] items-center justify-center border-l border-neutral-400">
      <svg viewBox="0 0 8 8" className="size-2">
        <path d="M1 1l3 5 3-5" fill="none" stroke="#333" strokeWidth="2" />
      </svg>
    </span>
  </button>
);

const Navigator = () => (
  <section className="flex w-[463px] shrink-0 flex-col bg-[#e2e2e2]">
    <div className="flex h-4 items-center gap-2 pr-1 pl-1">
      <span className="flex-1 border-t-2 border-dotted border-neutral-400" />
      <button type="button" aria-label="收起" className="flex rotate-180">
        <Caret />
      </button>
      <button type="button" aria-label="关闭" className="flex">
        <Icon name="cross" className="size-[7px]" />
      </button>
    </div>
    <div className="border border-[#777]">
      <OperationTable />
      <div className="flex h-[14px] items-center bg-[#eef0f4]">
        <button type="button" aria-label="向左滚动" className="flex w-4 justify-center bg-[#cbd9fa]">
          <svg viewBox="0 0 8 12" className="h-3 w-2">
            <path d="M6 3L3 6l3 3" fill="none" stroke="#27407c" strokeWidth="2" />
          </svg>
        </button>
        <div className="flex h-3 w-[308px] items-center justify-center gap-px rounded-sm border border-[#98aee6] bg-linear-to-b from-[#cbd8fd] to-[#a9bff5]">
          <span className="h-1 w-px bg-[#7f97d8]" />
          <span className="h-1 w-px bg-[#7f97d8]" />
          <span className="h-1 w-px bg-[#7f97d8]" />
        </div>
        <button type="button" aria-label="向右滚动" className="ml-auto flex w-4 justify-center bg-[#cbd9fa]">
          <svg viewBox="0 0 8 12" className="h-3 w-2">
            <path d="M2 3l3 3-3 3" fill="none" stroke="#27407c" strokeWidth="2" />
          </svg>
        </button>
      </div>
    </div>
    <div className="flex h-[10px] items-center justify-center">
      <span className="h-px flex-1 bg-neutral-300" />
      <span className="h-1 w-[86px] border-b border-neutral-500 bg-neutral-400" />
      <span className="h-px flex-1 bg-neutral-300" />
    </div>
    <Section title="相依性" />
    <Section title="细节" />
  </section>
);

const bolts = [
  [236, 84],
  [586, 98],
  [298, 790],
  [851, 813],
];

const Viewport = () => (
  <svg viewBox="527 134 553 531" className="min-w-0 flex-1 bg-black" role="img" aria-label="模型">
    <g transform="translate(620 180) scale(0.3333)">
      <path d="M148 95L175 62l25-2 30 70 18 75-50 20-28 50h-45l-20-25z" fill="#15301b" />
      <path d="M137 112l20 3 12 42 30 32-42-10-22-34z" fill="#2b5433" />
      <path d="M97 185l33-38 26 34-46 74-13-30z" fill="#b9aa0d" />
      <path d="M176 60h16l-4 18-10-4z" fill="#d41812" />
      <path d="M68 345l27-40 290 150 10 240 40 100-260 110-25-55 50-75 50-65V670L130 470z" fill="#11261a" />
      <path d="M198 60l410 16 3 35 11 40-8 12 8 85-312-12-48-32-20 2-8-60-22-50z" fill="#377137" />
      <path d="M310 236l312 9 40 230 60 120 60 60-60 130-190-60-70-20-60-260z" fill="#152b15" />
      <path d="M310 236l308 8 2 28-278-10z" fill="#32602e" />
      <path d="M375 303l216 3v44l-176-1z" fill="#3a753b" />
      <path d="M410 350l220 5 2 24-204-6z" fill="#2f562a" />
      <path d="M500 440l82 3-1 29-70-3zM590 305l30 -8 8 56-38-2z" fill="#2f5c30" />
      <path d="M505 472l150 5 8 25-140-4z" fill="#244420" />
      <path d="M540 558l130 5 20 34-140-5z" fill="#37713a" />
      <path d="M248 204l27 1 35 30 120 110 80 115 42 95-4 60-22 40-30-60-60-130z" fill="#2b4b20" />
      <path d="M622 218l26 2 4 110 20 165 50 80 62 60-8 50-65-70-40-90-25-130z" fill="#2d4e24" />
      <path d="M400 700l110-30 20 40-15 100-25-30z M625 700l65-60 80 45-50 95z" fill="#11240f" />

      <path
        d="M95 305c40-25 75-22 85-60l28-26 42-13 20 10 55 60 65 75 60 90 50 70 30 34-2 45-13 30 12 35-17 17-45-7-10-10-40 30-25 7-105-12-2-12 47-48 35-40 7-50-22-40-50-70-80-55-70-30z"
        fill="#00cfee"
      />
      <path d="M190 230l55 48 80 56 75 70 60 68-18 20-62-62-60-62-70-45-75-33z" fill="#0b889b" />
      <path
        d="M95 305c65 22 120 50 180 100 60 45 98 95 97 135l-22 44c-3-60-30-100-75-150-50-45-120-75-207-106z"
        fill="#d50c0b"
      />
      <g fill="none" stroke="#07404c" strokeWidth="3">
        <path d="M185 290c120 20 200 110 265 190M325 275l-15 60M205 220l60 62 100 80 95 110" />
        <path d="M250 210l20 60M155 275l10 20M195 290l10-30M290 330l-12 30M340 390l20-20" />
        <path d="M390 510l42-10 38 50-45 28zM495 540l30 10-5 40-35 20" />
        <circle cx="435" cy="605" r="43" />
        <path d="M330 620l90 8 90-30M300 645l130 12 70-50M285 665l120 8M460 480l55 65-10 35" />
        <path d="M370 580l70 20M480 540v60l-40 60" />
      </g>
      <path d="M651 330l19 14 20 80 12 70 35 68 65 43 78 45 25 38-14 22-76 3-3-24-38-7 7-30-57-62-45-80-14-80z" fill="#00cfee" />
      <path d="M643 225l12 10-6 50z" fill="#0b9fb8" />
      <path
        d="M660 350l35 150 40 70 90 75 75 20M700 510l80 120M690 530l30 20M780 650l110 28"
        fill="none"
        stroke="#07404c"
        strokeWidth="3"
      />

      <path d="M165 955l-14-90 60-80 60-55 140 70 295 5 175-75-1 105-15 60-75 80z" fill="#102319" />
      <path d="M283 695l125 8 60 45 45-40 15 4-22 68-50 8-70-8-103-65z" fill="#2d5434" />
      <path d="M535 705l95 6 72 87-198-3z" fill="#3a733d" />
      <path d="M635 700l28-8 50 90 100-60 5-10 73 4-3 25-88 45-100 14z" fill="#2c5132" />
      <path d="M265 765l115 60-105-6zM790 835l85-50 5 52z" fill="#31603a" />
      <path d="M203 782l22 2 14 78-22 4z" fill="#275033" />
      <path d="M150 862l36-48 10 55 20 20-38 55-12-5z" fill="#bdae0e" />
      <path d="M218 905l92 3-28 50-92-7zM705 925l102 10-30 42-92-5z" fill="#5a5408" />
      <path d="M268 850l88 6 2 15-90-4zM767 872l86 5v14l-84-5z" fill="#ea220f" />
      <path d="M272 735l130 68 88 2 15-22M690 817l90 3 97-60" fill="none" stroke="#b52a20" strokeWidth="6" />
      <path d="M528 705a21 8 0 0 1 42 3zM618 340l10 6v10l-14-3z" fill="#08128c" />
      <ellipse cx="429" cy="180" rx="24" ry="23" fill="#0812a8" />
      {bolts.map(([x, y]) => (
        <g key={x}>
          <circle cx={x} cy={y} r="15" fill="#6a6a6a" stroke="#f4f4f4" strokeWidth="8" />
          <circle cx={x} cy={y} r="5" fill="#333" />
        </g>
      ))}
      <ellipse cx="474" cy="857" rx="21" ry="13" fill="#4b4f4c" />
      <ellipse cx="644" cy="864" rx="21" ry="13" fill="#4b4f4c" />
      <path d="M466 860l16-5M636 866l16-5" stroke="#fff" strokeWidth="5" />
      <g fill="#9a1696">
        <circle cx="333" cy="716" r="11" />
        <circle cx="443" cy="757" r="12" />
        <circle cx="673" cy="716" r="11" />
        <circle cx="754" cy="769" r="11" />
        <circle cx="848" cy="736" r="11" />
      </g>
      <g fill="#7a2412">
        <circle cx="360" cy="730" r="6" />
        <circle cx="692" cy="741" r="6" />
        <circle cx="825" cy="748" r="7" />
      </g>
      <path d="M460 487L427 330" stroke="#b8d8a8" strokeWidth="5" />
      <path d="M415 286l17 38-14 2z" fill="#c5e0b6" />
      <path d="M466 487l74-100" stroke="#1030b8" strokeWidth="6" />
      <path d="M551 371l-8 30-18-15z" fill="#1030b8" />
      <path d="M460 488h170" stroke="#eba890" strokeWidth="6" />
      <path d="M668 495l-44-10v14z" fill="#f0b39d" />
      <g fontSize="26" fontFamily="Liberation Sans, sans-serif">
        <text x="425" y="285" fill="#3f6b3f">YM</text>
        <text x="512" y="363" fill="#1030b8">ZM</text>
        <text x="468" y="416" fill="#1030b8">ZC</text>
        <text x="538" y="526" fill="#c0442c">XC</text>
        <text x="636" y="526" fill="#c0442c">XM</text>
      </g>
    </g>
    <path d="M545 606l10-4 14 2v18l-11 8-14-4z" fill="#9a9a9a" />
    <path d="M545 606l13 4 11-6M558 610v20" fill="none" stroke="#c9c9c9" />
    <path d="M563 606v-14M561 595l2-5 2 5" fill="none" stroke="#238a2c" strokeWidth="1.4" />
    <path d="M566 619h-26" stroke="#b82a24" strokeWidth="1.6" />
    <path d="M562 628l-5 10M555 633l3 6" stroke="#1a2fa6" strokeWidth="1.4" />
    <path d="M561 589l3 3M537 617l5 5" stroke="#888" />
    <circle cx="569" cy="619" r="3" fill="#e2e2e2" />
  </svg>
);

const GripRow = () => <span className="my-1 w-[18px] border-t-2 border-dotted border-neutral-400" />;

const LeftArrow = () => (
  <span className="flex h-2 w-full items-center pl-1">
    <svg viewBox="0 0 3 4" className="h-1 w-[3px]">
      <path d="M3 0v4L0 2z" fill="#222" />
    </svg>
  </span>
);

const ToolColumn = ({ names, className }: { names: string[]; className?: string }) => (
  <div className={clsx("flex flex-col items-center border-r border-b border-neutral-400 bg-[#dcdcda]", className)}>
    <GripRow />
    {names.map((name) =>
      name === "-" ? (
        <span key={name} className="my-px h-px w-full bg-neutral-400" />
      ) : (
        <button key={name} type="button" aria-label={name} className="flex h-[25px] items-center">
          <Icon name={name} />
        </button>
      )
    )}
    <LeftArrow />
  </div>
);

const rightTools = ["drillKey", "drillCut", "drillCopy", "drillGrey", "drillDel", "drillInfo", "drillMove"];
const viewTools = ["shaded", "plus", "wcs", "tower", "stock", "wraps"];

const RightDock = () => (
  <div className="flex w-[37px] shrink-0 flex-col bg-[#c6c6c4]">
    <div className="flex flex-col items-center border-b border-neutral-400 bg-[#dededc]">
      <GripRow />
      {rightTools.map((name) => (
        <button key={name} type="button" aria-label={name} className="flex h-[25px] items-center">
          <Icon name={name} />
        </button>
      ))}
      <LeftArrow />
      <GripRow />
      {viewTools.map((name) => (
        <button key={name} type="button" aria-label={name} className="flex h-[25px] w-full items-center pl-1">
          <Icon name={name} />
          <span className="ml-auto pr-1">{name === "tower" || name === "stock" ? null : <Caret />}</span>
        </button>
      ))}
      <LeftArrow />
    </div>
  </div>
);

const Tab = ({ name }: { name: string }) => (
  <button
    type="button"
    aria-label={name}
    className="flex h-8 w-[21px] items-center justify-center rounded-r-sm border border-l-0 border-neutral-500 bg-[#dfdfdd]"
  >
    <Icon name={name} />
  </button>
);

const ResourceBar = () => (
  <div className="flex w-[35px] shrink-0 border-l-8 border-[#e6e6e4] bg-[#979797]">
    <div className="flex flex-1 flex-col gap-px pt-[15px]">
      {["navA", "navB", "navC", "navD", "books"].map((name) => (
        <Tab key={name} name={name} />
      ))}
      <div className="flex flex-col gap-[11px] pt-[11px]">
        <Tab name="info" />
        <Tab name="webPage" />
        <Tab name="clock" />
      </div>
      <Tab name="machine" />
      <Tab name="roles" />
    </div>
    <span className="w-1 bg-[#c9c9c9]" />
  </div>
);

const tasks: [string, ReactNode][] = [
  [
    "nx",
    <>
      <span className="text-[10px]">汽模网</span>
      <span className="ml-1">QQ:24456...</span>
    </>,
  ],
  ["folder", "E:\\2014-3-333\\96..."],
  ["folder", "E:\\2014-3-333\\96..."],
  [
    "wps",
    <>
      WPS <span className="text-[10px]">演示</span> - [<span className="text-[10px]">尾门</span>...
    </>,
  ],
  ["camtasia", "Camtasia Studio ..."],
  ["recorder", "Recording..."],
];

const Taskbar = () => (
  <footer className="flex h-7 shrink-0 items-stretch border-t-4 border-b-2 border-t-[#3c7ac8] border-b-[#0b5a72] bg-linear-to-b from-[#1558d8] to-[#0c48c4] text-[8px] text-[#dceaff]">
    <button
      type="button"
      className="flex w-[76px] shrink-0 items-center gap-2 rounded-r-lg bg-linear-to-b from-[#58a850] via-[#2c8a2c] to-[#1c6c20] pl-[6px] text-[14px] text-[#e2f4da] italic"
    >
      <Icon name="flag" className="size-4" />
      开始
    </button>
    <div className="flex w-[78px] shrink-0 items-center justify-between pr-4 pl-3">
      <Icon name="quick" className="size-4" />
      <Icon name="desktop" className="size-4" />
    </div>
    {tasks.map(([icon, label], i) => (
      <button
        key={i}
        type="button"
        className={clsx(
          "mr-px flex w-[127px] min-w-0 items-center gap-1 rounded-sm border-l pl-2 whitespace-nowrap",
          i === 0 ? "border-[#08307c] bg-[#0d41a4]" : "border-[#1048b0] bg-linear-to-b from-[#2468e4] to-[#165cd8]"
        )}
      >
        <Icon name={icon} className="size-3" />
        <span className="flex items-center gap-x-1 overflow-hidden">{label}</span>
      </button>
    ))}
    <div className="ml-auto flex shrink-0 items-center">
      <span className="text-[10px] text-[#7d9fe0]">桌面</span>
      <span className="mr-6 ml-1 pb-2">»</span>
      <span>CH</span>
      <div className="ml-4 flex h-full items-center gap-1 bg-[#1b86dc] pr-3">
        <button type="button" aria-label="显示隐藏的图标" className="-ml-1 flex">
          <svg viewBox="0 0 12 12" className="size-3">
            <circle cx="6" cy="6" r="6" fill="#56b0f4" />
            <path d="M7 3L4 6l3 3" fill="none" stroke="#fff" strokeWidth="1.6" />
          </svg>
        </button>
        <svg viewBox="0 0 12 12" className="size-3">
          <circle cx="6" cy="6" r="6" fill="#f2d92d" />
          <path d="M0 6a6 6 0 0 0 9 5z" fill="#2f9a3a" />
          <path d="M6 3v6M3 6h6" stroke="#23541d" strokeWidth="2" />
        </svg>
        <span>07:29</span>
      </div>
    </div>
  </footer>
);

const TitleBar = () => (
  <header className="flex h-[21px] shrink-0 items-center border-t border-[#6f6c78] bg-linear-to-b from-[#4b4a50] from-25% to-[#1a1a19] to-40% pl-px text-white">
    <Icon name="nx" className="size-[14px]" />
    <h1 className="flex gap-[7px] pl-[3px] text-[11px] leading-none font-bold whitespace-nowrap">
      <span className="pr-[6px]">汽模网</span>
      <span>QQ:2445653132</span>
      <span>-</span>
      <span>加工</span>
      <span>-</span>
      <span>[_9677266480,6880-OP50.prt</span>
      <span>(修改的) ]</span>
    </h1>
    <span className="ml-auto pr-5 font-['Liberation_Sans',sans-serif] text-[11px] font-bold">SIEMENS</span>
    <div className="flex gap-[2px] pr-1">
      <button type="button" aria-label="最小化" className="flex size-[17px] items-center justify-center bg-[#48484a]">
        <span className="mt-1 h-[2px] w-[6px] bg-white" />
      </button>
      <button type="button" aria-label="还原" className="flex size-[17px] items-center justify-center bg-[#48484a]">
        <svg viewBox="0 0 10 10" className="size-[10px]">
          <path d="M4 1h5v4M1 4h5v5H1z" fill="none" stroke="#ddd" strokeWidth="1.5" />
        </svg>
      </button>
      <button
        type="button"
        aria-label="关闭"
        className="flex size-[17px] items-center justify-center rounded-sm bg-[#d4502a]"
      >
        <svg viewBox="0 0 10 10" className="size-[10px]">
          <path d="M1 1l8 8M9 1L1 9" stroke="#fff" strokeWidth="2" />
        </svg>
      </button>
    </div>
  </header>
);

const MenuBar = () => (
  <nav className="flex h-[19px] shrink-0 items-center border-b border-neutral-400 bg-[#dcdcda] font-['Liberation_Serif','Noto_Sans_CJK_SC',serif] text-[10px] leading-none">
    <Grip />
    <Icon name="mill" className="size-3" />
    <div className="flex gap-[11px] pl-1">
      {menus.map(([label, hotkey]) => (
        <MenuItem key={label} label={label} hotkey={hotkey} />
      ))}
      <button type="button">
        <u>D</u> 电
      </button>
      <button type="button" className="pl-2">
        极
      </button>
      <MenuItem label="帮助" hotkey="H" />
    </div>
    <div className="ml-auto flex gap-[2px] pr-1">
      {["M2 8h4", "M3 2h5v4H3zM1 5h4v4H1z", "M2 2l6 6M8 2l-6 6"].map((d, i) => (
        <button
          key={d}
          type="button"
          aria-label={["最小化窗口", "还原窗口", "关闭窗口"][i]}
          className="flex size-[14px] items-center justify-center rounded-xs border border-neutral-500 bg-[#ededeb]"
        >
          <svg viewBox="0 0 10 10" className="size-[10px]">
            <path d={d} fill="none" stroke="#444" strokeWidth={i === 1 ? "1.2" : "2"} />
          </svg>
        </button>
      ))}
    </div>
  </nav>
);

const App = () => (
  <div className="flex h-screen flex-col overflow-hidden bg-[#cfcfcd] font-['DejaVu_Sans_Mono','Noto_Sans_CJK_SC',monospace] text-[10px] text-black">
    <TitleBar />
    <MenuBar />

    <div className="shrink-0 border-b-2 border-[#959593] bg-linear-to-b from-[#d8d8d6] to-[#c2c2c0]">
      <div className="flex h-[27px]">
        <Band>
          <Grip />
          <button type="button" className="flex items-center gap-[3px] px-[2px] text-[10px]">
            <Icon name="nx" />
            开始
            <Caret />
          </button>
          <Tool name="page" />
          <Tool name="open" />
          <Tool name="save" />
          <Tool name="print" />
          <Divider />
          <Tool name="cut" />
          <Tool name="copy" />
          <Tool name="paste" />
          <Tool name="cross" />
          <Divider />
          <Tool name="undo" />
          <Divider />
          <Tool name="command" />
          <More />
        </Band>
        <Band>
          <Grip />
          <Tool name="fit" />
          <DropCaret />
          <Tool name="cube" />
          <DropCaret />
          <Tool name="section" />
          <More />
        </Band>
        <span className="w-[248px]" />
        <Band>
          <Grip />
          <Tool name="orient" />
          <Tool name="csys" />
          <Tool name="cross" />
          <More />
        </Band>
      </div>
      <div className="flex h-[27px]">
        <Band>
          <Grip />
          <Tool name="geomNew" />
          <Tool name="toolPair" />
          <Tool name="blockView" active />
          <Tool name="ruler" />
          <Tool name="mill" />
          <More />
        </Band>
        <span className="w-[6px]" />
        <Band>
          <Grip />
          {["line", "arc", "rect", "spline", "text", "offset", "patch", "swirl", "swirl", "project", "yellowSheets", "blueSheets", "mirror", "extrude"].map(
            (name, i) => (
              <Tool key={i} name={name} />
            )
          )}
          <More />
        </Band>
        <Band>
          <Grip />
          {["trimA", "trimB", "trimC", "fillet", "sketch", "curves"].map((name) => (
            <Tool key={name} name={name} />
          ))}
          <button
            type="button"
            className="flex items-center gap-1 font-['Liberation_Serif','Noto_Sans_CJK_SC',serif] text-[10px] whitespace-nowrap"
          >
            <span>
              操作导航器(<u>O</u>)
            </span>
            <Caret />
          </button>
          <More />
        </Band>
      </div>
    </div>

    <div className="flex h-[21px] shrink-0 items-center border-b border-[#dededc] bg-[#c9c9c7] pl-[3px]">
      <Combo label="选择过滤器" value="没有选择过滤器" className="w-[88px]" />
      <Combo label="选择范围" value="整个装配" className="ml-[6px] w-[93px]" />
      <span className="ml-1 flex items-center gap-[2px]">
        <Icon name="binocular" className="size-4" />
        <Divider />
        <Icon name="snap" className="size-4" />
        <Caret />
        <Icon name="enter" className="size-4" />
        <Icon name="solids" className="size-4" />
        <Divider />
        <Icon name="ledge" className="size-4" />
      </span>
      <span className="ml-auto pt-2 pr-1">
        <Caret />
      </span>
    </div>

    <div className="flex h-[17px] shrink-0 items-center border-b-2 border-[#8e8e8e] bg-[#d2d2d0]">
      <span className="h-full w-[543px] border-r border-neutral-300" />
      <output className="pl-[2px] font-bold whitespace-nowrap">CAM 加工工艺 'QINGJIAO' 已选定</output>
      <span className="ml-auto flex h-full items-center gap-4">
        <span className="h-full w-px bg-neutral-300" />
        <span className="h-full w-px bg-neutral-300" />
        <button type="button" aria-label="全屏" className="flex pr-1 pl-2">
          <Icon name="expand" className="size-3" />
        </button>
      </span>
    </div>

    <main className="flex min-h-0 flex-1 bg-linear-to-r from-[#cfd0d1] to-[#bfc0bf]">
      <div className="flex shrink-0 items-start">
        <ToolColumn className="w-[26px]" names={["starPage", "starTool", "starCube", "starRuler", "starMill"]} />
        <ToolColumn
          className="mt-[142px] w-[27px]"
          names={[
            "millGlow",
            "toolKey",
            "toolHook",
            "verify",
            "toolPost",
            "okPlane",
            "greyPlane",
            "okShop",
            "-",
            "drillArrow",
            "post",
            "report",
            "timer",
          ]}
        />
      </div>
      <div className="flex shrink-0 border-r border-neutral-500 bg-[#e2e2e2] pr-[7px] pl-[3px]">
        <Navigator />
      </div>
      <Viewport />
      <RightDock />
      <ResourceBar />
    </main>

    <div className="flex h-[27px] shrink-0 items-center bg-linear-to-b from-[#dededc] to-[#c4c4c2] pl-4">
      <Grip />
      <span className="w-[3px]" />
      <Combo label="图层" value="4" className="w-[30px]" />
      <span className="w-1" />
      <Tool name="layers" />
      <Divider />
      {["gouge", "gougeB", "axesPen", "axesMesh", "axes", "csys", "axesArrow", "axesTurn", "axesSave", "axesBar"].map((name) => (
        <Tool key={name} name={name} active={name === "axesPen"} />
      ))}
      <Divider />
      {["measure", "angle", "gauge", "gauge", "pot", "stamp", "gLine", "gLineDot", "gCurve", "gCross", "gTarget", "gCircle", "gSlash", "gFace", "gTangent"].map(
        (name, i) => (
          <Tool key={i} name={name} />
        )
      )}
      <More />
    </div>

    <Taskbar />

    <svg
      viewBox="0 0 12 18"
      className="pointer-events-none absolute top-[437px] left-[210px] h-[18px] w-3"
      aria-hidden="true"
    >
      <path d="M1 1v13l3-3 3 6 2-1-2-6h4z" fill="#fff" stroke="#222" />
    </svg>
  </div>
);

export default App;
